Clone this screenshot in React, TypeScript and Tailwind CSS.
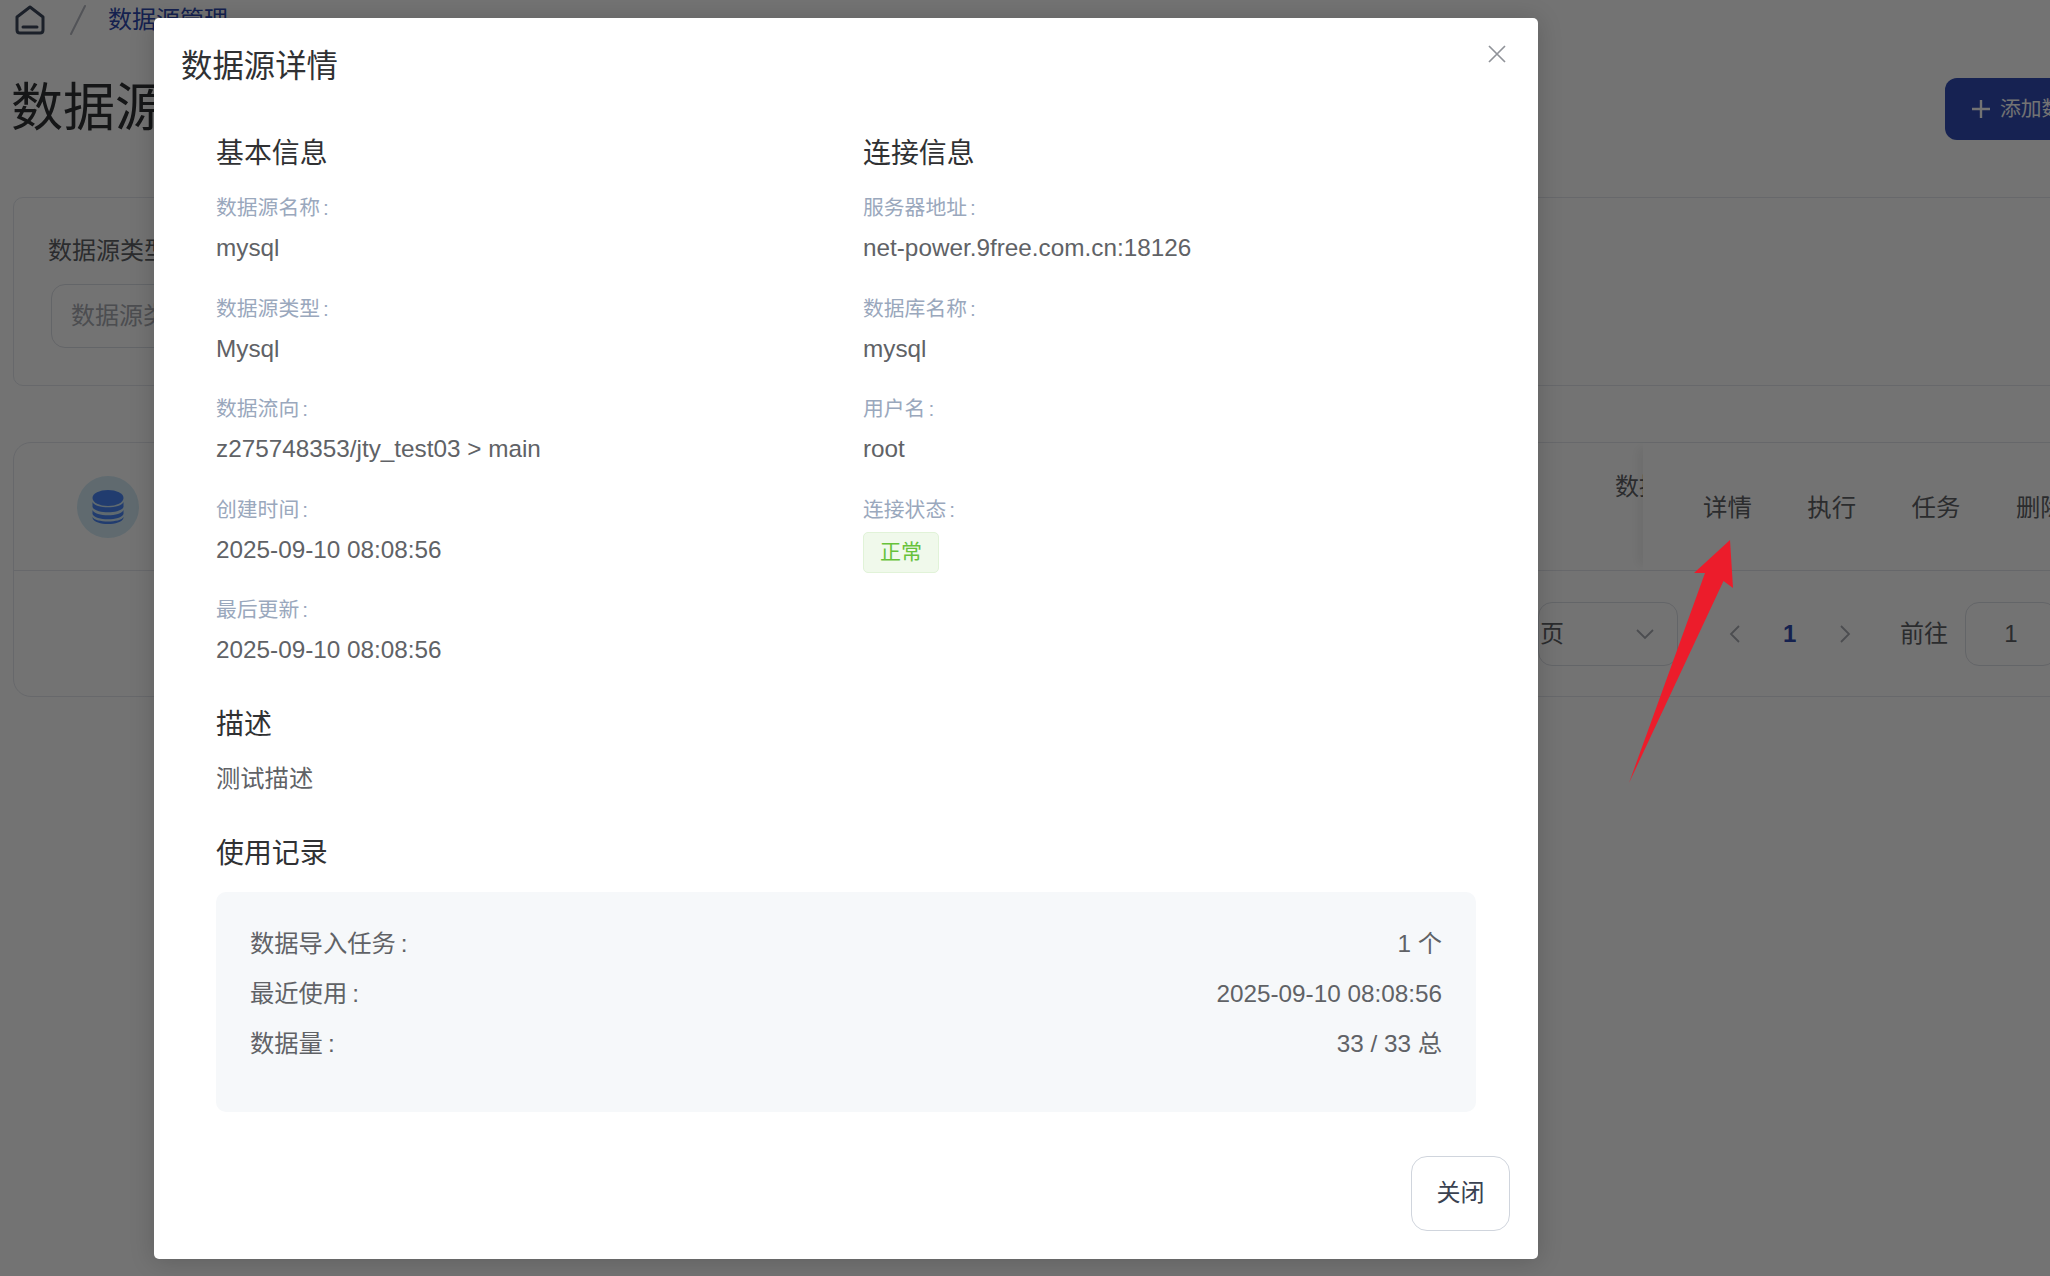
const FONT = "font-['Liberation_Sans','Noto_Sans_CJK_SC',sans-serif]";

function Colon({ className }: { className: string }) {
  return <span className={className}>:</span>;
}

function Field({ label, value }: { label: string; value: string }) {
  return (
    <div className="mb-[30.5px]">
      <div className="text-[20.8px] leading-[28px] text-[#9aa8bd]">
        {label}
        <Colon className="ml-[3px]" />
      </div>
      <div className="mt-[10px] text-[24.3px] leading-[32px] text-[#606266]">{value}</div>
    </div>
  );
}

function UsageRow({ label, value }: { label: string; value: string }) {
  return (
    <div className="flex justify-between text-[24.3px] leading-[32px] text-[#606266]">
      <span>
        {label}
        <Colon className="ml-[5px]" />
      </span>
      <span>{value}</span>
    </div>
  );
}

function Background() {
  return (
    <div className="w-[2200px]">
      {/* breadcrumb */}
      <div className="flex h-[40px] items-center pl-[15px]">
        <svg width="30" height="30" viewBox="0 0 30 30" fill="none" stroke="#3c475c" strokeWidth="3" strokeLinejoin="round" strokeLinecap="round">
          <path d="M15 2 L28 12 V25 Q28 28 25 28 H5 Q2 28 2 25 V12 Z" />
          <path d="M8 22 H22" />
        </svg>
        <svg className="ml-[24px]" width="18" height="32" viewBox="0 0 18 32" fill="none" stroke="#b5b9c2" strokeWidth="2" strokeLinecap="round">
          <path d="M2 30 L16 2" />
        </svg>
        <span className="ml-[21px] text-[24px] leading-[32px] text-[#2f4bb0]">数据源管理</span>
      </div>

      {/* title row */}
      <div className="flex h-[136px] items-center justify-between pl-[11px]">
        <h1 className="text-[52px] font-normal leading-[64px] text-[#303133]">数据源管理</h1>
        <div className="mr-[5px] mt-[2px] flex h-[62px] w-[250px] items-center rounded-[12px] bg-[#314cb6] pl-[27px] text-[20.8px] text-white">
          <svg width="18" height="18" viewBox="0 0 18 18" fill="none" stroke="#ffffff" strokeWidth="2.4">
            <path d="M9 0 V18 M0 9 H18" />
          </svg>
          <span className="ml-[10px]">添加数据源</span>
        </div>
      </div>

      {/* filter card */}
      <div className="ml-[13px] mt-[21px] h-[189px] rounded-[10px] border border-[#e4e7ed] pl-[34px] pt-[37px]">
        <div className="text-[24px] leading-[32px] text-[#606266]">数据源类型</div>
        <div className="ml-[3px] mt-[17px] flex h-[64px] w-[320px] items-center rounded-[14px] border border-[#dcdfe6] pl-[19px] text-[24px] text-[#a8abb2]">
          数据源类型
        </div>
      </div>

      {/* table card */}
      <div className="ml-[13px] mt-[56px] h-[255px] rounded-[18px] border border-[#e4e7ed]">
        <div className="flex h-[128px] border-b border-[#e4e7ed]">
          <div className="ml-[63px] mt-[33px] flex h-[62px] w-[62px] items-center justify-center rounded-full bg-[#d4ecf7]">
            <svg width="32" height="35" viewBox="0 0 32 35" fill="#4a85f5">
              <ellipse cx="16" cy="8" rx="15.5" ry="8" />
              <path d="M0.5 12 C3 19 29 19 31.5 12 V17 C29 24 3 24 0.5 17 Z" />
              <path d="M0.5 20 C3 27 29 27 31.5 20 V24 C29 31 3 31 0.5 24 Z" />
              <path d="M0.5 27 C3 33 29 33 31.5 27 V28 C29 36 3 36 0.5 28 Z" />
            </svg>
          </div>
          <div className="ml-[1476px] mt-[28px] w-[28px] overflow-hidden whitespace-nowrap text-[24px] leading-[32px] text-[#606266]">
            数据
          </div>
          <div className="flex h-[127px] items-center gap-[55.5px] pl-[60px] pt-[3px] text-[24.4px] text-[#606266] shadow-[-10px_0_10px_-5px_rgba(0,0,0,0.06)]">
            <span>详情</span>
            <span>执行</span>
            <span>任务</span>
            <span>删除</span>
          </div>
        </div>
        <div className="flex h-[126px] items-center pl-[1524px] text-[24px] text-[#606266]">
          <div className="flex h-[64px] w-[140px] items-center justify-between rounded-[14px] border border-[#dcdfe6] pr-[22px]">
            <span className="ml-[1px]">页</span>
            <svg width="20" height="12" viewBox="0 0 20 12" fill="none" stroke="#a8abb2" strokeWidth="1.8">
              <path d="M2 2 L10 10 L18 2" />
            </svg>
          </div>
          <svg className="ml-[51px]" width="12" height="20" viewBox="0 0 12 20" fill="none" stroke="#a8abb2" strokeWidth="1.8">
            <path d="M10 2 L2 10 L10 18" />
          </svg>
          <span className="ml-[42px] w-[10px] text-center font-bold text-[#2f4bb0]">1</span>
          <svg className="ml-[46px]" width="12" height="20" viewBox="0 0 12 20" fill="none" stroke="#a8abb2" strokeWidth="1.8">
            <path d="M2 2 L10 10 L2 18" />
          </svg>
          <span className="ml-[49px]">前往</span>
          <div className="ml-[17px] flex h-[64px] w-[92px] items-center justify-center rounded-[14px] border border-[#dcdfe6]">1</div>
        </div>
      </div>
    </div>
  );
}

export default function App() {
  return (
    <div className={`relative h-[1276px] w-[2050px] overflow-hidden bg-white ${FONT}`}>
      <Background />

      {/* mask + dialog */}
      <div className="absolute inset-0 bg-black/55 pl-[154px] pt-[18px]">
        <div className="relative h-[1241px] w-[1384px] rounded-[5px] bg-white px-[27px] pt-[29px] shadow-[0_2px_24px_rgba(0,0,0,0.18)]">
          <h2 className="text-[31.4px] font-normal leading-[40px] text-[#303133]">数据源详情</h2>
          <svg className="absolute right-[32px] top-[27px]" width="18" height="18" viewBox="0 0 18 18" fill="none" stroke="#909399" strokeWidth="1.7">
            <path d="M1 1 L17 17 M17 1 L1 17" />
          </svg>

          <div className="mx-[35px] mt-[49px]">
            <div className="grid grid-cols-2 gap-x-[34px]">
              <div>
                <h3 className="mb-[22px] text-[27.9px] font-normal leading-[36px] text-[#303133]">基本信息</h3>
                <Field label="数据源名称" value="mysql" />
                <Field label="数据源类型" value="Mysql" />
                <Field label="数据流向" value="z275748353/jty_test03 > main" />
                <Field label="创建时间" value="2025-09-10 08:08:56" />
                <Field label="最后更新" value="2025-09-10 08:08:56" />
              </div>
              <div>
                <h3 className="mb-[22px] text-[27.9px] font-normal leading-[36px] text-[#303133]">连接信息</h3>
                <Field label="服务器地址" value="net-power.9free.com.cn:18126" />
                <Field label="数据库名称" value="mysql" />
                <Field label="用户名" value="root" />
                <div className="text-[20.8px] leading-[28px] text-[#9aa8bd]">
                  连接状态
                  <Colon className="ml-[3px]" />
                </div>
                <div className="mt-[8px] flex h-[41px] w-[76px] items-center justify-center rounded-[5px] border border-[#e1f3d8] bg-[#f0f9eb] text-[21px] text-[#67c23a]">
                  正常
                </div>
              </div>
            </div>

            <h3 className="mt-[10px] text-[27.9px] font-normal leading-[36px] text-[#303133]">描述</h3>
            <p className="mt-[20px] text-[24.3px] leading-[32px] text-[#606266]">测试描述</p>

            <h3 className="mt-[41px] text-[27.9px] font-normal leading-[36px] text-[#303133]">使用记录</h3>
            <div className="mt-[20px] flex h-[220px] flex-col gap-[18px] rounded-[10px] bg-[#f6f8fa] px-[34px] pt-[36px]">
              <UsageRow label="数据导入任务" value="1 个" />
              <UsageRow label="最近使用" value="2025-09-10 08:08:56" />
              <UsageRow label="数据量" value="33 / 33 总" />
            </div>
          </div>

          <div className="mt-[44px] flex justify-end pr-[1px]">
            <button className="h-[75px] w-[99px] rounded-[16px] border border-[#d0d5dd] bg-white text-[24px] text-[#3a4150]">
              关闭
            </button>
          </div>
        </div>
      </div>

      {/* annotation arrow */}
      <svg className="absolute left-[1620px] top-[530px]" width="125" height="265" viewBox="0 0 125 265" fill="#ec1c2b">
        <path d="M110 10 L113 58 L103.5 51 L9 253 L85 43 L74 43 Z" />
      </svg>
    </div>
  );
}
